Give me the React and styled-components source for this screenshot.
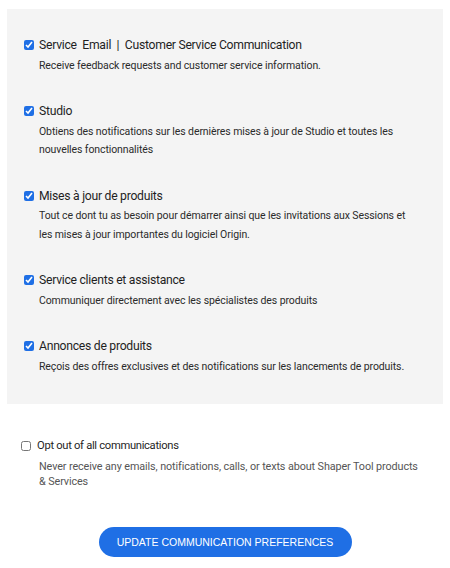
import React from "react";
import styled, { createGlobalStyle } from "styled-components";

const GlobalStyle = createGlobalStyle`
  html, body {
    margin: 0;
    padding: 0;
    background: #ffffff;
  }
  body {
    font-family: "Roboto", "Noto Sans", sans-serif;
    color: #222222;
  }
`;

const Page = styled.div`
  width: 450px;
  padding-top: 9px;
  box-sizing: border-box;
`;

const Panel = styled.section`
  margin: 0 7px 0 7px;
  padding: 26px 33px 28px 17px;
  background: #f4f4f4;
  display: flex;
  flex-direction: column;
  gap: 26px;
`;

const Item = styled.div`
  display: flex;
  flex-direction: column;
`;

const LabelRow = styled.label`
  display: flex;
  align-items: center;
  gap: ${(p) => (p.$small ? "6px" : "5px")};
  font-size: ${(p) => (p.$small ? "11.2px" : "12.2px")};
  letter-spacing: ${(p) => (p.$small ? "-0.3px" : "-0.27px")};
  line-height: ${(p) => (p.$small ? "18px" : "20px")};
  color: #1f1f1f;
  white-space: pre;
`;

const Check = styled.input`
  width: 10px;
  height: 10px;
  margin: 0;
  flex: none;
  accent-color: #1f6fe5;
`;

const Desc = styled.p`
  margin: ${(p) => (p.$muted ? "5px" : "1.5px")} 0 0 15px;
  font-size: ${(p) => (p.$muted ? "10.8px" : "10.5px")};
  letter-spacing: -0.1px;
  line-height: ${(p) => (p.$muted ? "14.5px" : "18.5px")};
  color: ${(p) => (p.$muted ? "#555555" : "#2b2b2b")};
`;

const OptOut = styled.div`
  margin: 33px 0 0 21px;
  padding-right: 28px;
  display: flex;
  flex-direction: column;
  & > p {
    margin-left: 18px;
  }
`;

const Footer = styled.div`
  display: flex;
  justify-content: center;
  margin-top: 38px;
`;

const UpdateButton = styled.button`
  height: 30px;
  width: 253px;
  border: none;
  border-radius: 15px;
  background: #1f6fe5;
  color: #ffffff;
  font-family: "Liberation Sans", Arial, sans-serif;
  font-size: 10.5px;
  text-transform: uppercase;
  cursor: pointer;
`;

const topics = [
  {
    label: "Service  Email  |  Customer Service Communication",
    desc: "Receive feedback requests and customer service information.",
  },
  {
    label: "Studio",
    desc:
      "Obtiens des notifications sur les dernières mises à jour de Studio et toutes les nouvelles fonctionnalités",
  },
  {
    label: "Mises à jour de produits",
    desc:
      "Tout ce dont tu as besoin pour démarrer ainsi que les invitations aux Sessions et les mises à jour importantes du logiciel Origin.",
  },
  {
    label: "Service clients et assistance",
    desc: "Communiquer directement avec les spécialistes des produits",
  },
  {
    label: "Annonces de produits",
    desc:
      "Reçois des offres exclusives et des notifications sur les lancements de produits.",
  },
];

export default function App() {
  return (
    <Page>
      <GlobalStyle />
      <Panel>
        {topics.map((t) => (
          <Item key={t.label}>
            <LabelRow>
              <Check type="checkbox" defaultChecked />
              {t.label}
            </LabelRow>
            <Desc>{t.desc}</Desc>
          </Item>
        ))}
      </Panel>

      <OptOut>
        <LabelRow $small>
          <Check type="checkbox" />
          Opt out of all communications
        </LabelRow>
        <Desc $muted>
          Never receive any emails, notifications, calls, or texts about Shaper
          Tool products &amp; Services
        </Desc>
      </OptOut>

      <Footer>
        <UpdateButton>Update Communication Preferences</UpdateButton>
      </Footer>
    </Page>
  );
}
